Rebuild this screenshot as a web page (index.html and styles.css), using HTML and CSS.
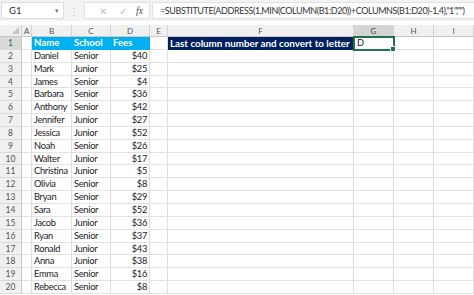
FILE: index.html
```html
<!DOCTYPE html>
<html>
<head>
    <title>Last column letter</title>
    <link rel="stylesheet" href="styles.css">
</head>
<body>
    <div class="toolbar">
        <div class="namebox">
            <span>G1</span>
            <span class="namebox-arrow">&#9662;</span>
        </div>
        <div class="grip">&#8942;</div>
        <div class="fxbox">
            <span class="fx-btn">&#10005;</span>
            <span class="fx-btn">&#10003;</span>
            <span class="fx-label">fx</span>
        </div>
        <div class="formula">=SUBSTITUTE(ADDRESS(1,MIN(COLUMN(B1:D20))+COLUMNS(B1:D20)-1,4),"1","")</div>
    </div>

    <div class="sheet">
        <div class="row colheads">
            <div class="corner"></div>
            <div>A</div><div>B</div><div>C</div><div>D</div><div>E</div><div>F</div>
            <div class="active-col">G</div><div>H</div><div>I</div>
        </div>
        <div class="row">
            <div class="rh active-row">1</div><div></div>
            <div class="blue">Name</div><div class="blue">School</div><div class="blue">Fees</div>
            <div></div><div class="navy">Last column number and convert to letter</div>
            <div class="selected">D</div><div></div><div></div>
        </div>
        <div class="row"><div class="rh">2</div><div></div><div>Daniel</div><div>Senior</div><div class="num">$40</div><div></div><div></div><div></div><div></div><div></div></div>
        <div class="row"><div class="rh">3</div><div></div><div>Mark</div><div>Junior</div><div class="num">$25</div><div></div><div></div><div></div><div></div><div></div></div>
        <div class="row"><div class="rh">4</div><div></div><div>James</div><div>Senior</div><div class="num">$4</div><div></div><div></div><div></div><div></div><div></div></div>
        <div class="row"><div class="rh">5</div><div></div><div>Barbara</div><div>Senior</div><div class="num">$36</div><div></div><div></div><div></div><div></div><div></div></div>
        <div class="row"><div class="rh">6</div><div></div><div>Anthony</div><div>Senior</div><div class="num">$42</div><div></div><div></div><div></div><div></div><div></div></div>
        <div class="row"><div class="rh">7</div><div></div><div>Jennifer</div><div>Junior</div><div class="num">$27</div><div></div><div></div><div></div><div></div><div></div></div>
        <div class="row"><div class="rh">8</div><div></div><div>Jessica</div><div>Junior</div><div class="num">$52</div><div></div><div></div><div></div><div></div><div></div></div>
        <div class="row"><div class="rh">9</div><div></div><div>Noah</div><div>Senior</div><div class="num">$26</div><div></div><div></div><div></div><div></div><div></div></div>
        <div class="row"><div class="rh">10</div><div></div><div>Walter</div><div>Junior</div><div class="num">$17</div><div></div><div></div><div></div><div></div><div></div></div>
        <div class="row"><div class="rh">11</div><div></div><div>Christina</div><div>Junior</div><div class="num">$5</div><div></div><div></div><div></div><div></div><div></div></div>
        <div class="row"><div class="rh">12</div><div></div><div>Olivia</div><div>Senior</div><div class="num">$8</div><div></div><div></div><div></div><div></div><div></div></div>
        <div class="row"><div class="rh">13</div><div></div><div>Bryan</div><div>Senior</div><div class="num">$29</div><div></div><div></div><div></div><div></div><div></div></div>
        <div class="row"><div class="rh">14</div><div></div><div>Sara</div><div>Senior</div><div class="num">$52</div><div></div><div></div><div></div><div></div><div></div></div>
        <div class="row"><div class="rh">15</div><div></div><div>Jacob</div><div>Junior</div><div class="num">$36</div><div></div><div></div><div></div><div></div><div></div></div>
        <div class="row"><div class="rh">16</div><div></div><div>Ryan</div><div>Senior</div><div class="num">$37</div><div></div><div></div><div></div><div></div><div></div></div>
        <div class="row"><div class="rh">17</div><div></div><div>Ronald</div><div>Junior</div><div class="num">$43</div><div></div><div></div><div></div><div></div><div></div></div>
        <div class="row"><div class="rh">18</div><div></div><div>Anna</div><div>Junior</div><div class="num">$38</div><div></div><div></div><div></div><div></div><div></div></div>
        <div class="row"><div class="rh">19</div><div></div><div>Emma</div><div>Senior</div><div class="num">$16</div><div></div><div></div><div></div><div></div><div></div></div>
        <div class="row"><div class="rh">20</div><div></div><div>Rebecca</div><div>Senior</div><div class="num">$8</div><div></div><div></div><div></div><div></div><div></div></div>
    </div>
</body>
</html>
```

FILE: styles.css
```css
body {
    margin: 0;
    width: 474px;
    height: 295px;
    overflow: hidden;
    background: #fff;
    font-family: Lato, "Noto Sans", sans-serif;
    color: #222;
}
.toolbar {
    display: flex;
    align-items: center;
    height: 21px;
    padding: 0 0 0 1px;
    background: #f3f3f3;
    box-sizing: border-box;
}
.namebox {
    display: flex;
    justify-content: space-between;
    align-items: center;
    width: 63px;
    height: 17px;
    padding: 0 4px 0 7px;
    box-sizing: border-box;
    background: #fff;
    border: 1px solid #dcdcdc;
    font-size: 9.5px;
    color: #333;
}
.namebox-arrow {
    font-size: 7px;
    color: #777;
}
.grip {
    width: 20px;
    text-align: center;
    color: #c4c4c4;
    font-size: 10px;
}
.fxbox {
    display: flex;
    align-items: center;
    width: 66px;
    height: 17px;
    box-sizing: border-box;
    padding-left: 8px;
    background: #fff;
    border: 1px solid #e0e0e0;
}
.fx-btn {
    width: 20px;
    text-align: center;
    color: #c0c0c0;
    font-size: 10px;
}
.fx-label {
    margin-left: 3px;
    font-family: "Liberation Serif", serif;
    font-style: italic;
    font-size: 10px;
    color: #555;
}
.formula {
    flex: 1;
    height: 17px;
    margin-left: 2px;
    padding-left: 7px;
    box-sizing: border-box;
    background: #fff;
    border: 1px solid #e0e0e0;
    border-right: none;
    font-size: 9px;
    letter-spacing: -0.4px;
    line-height: 15px;
    color: #333;
    white-space: nowrap;
    overflow: hidden;
}
.sheet {
    margin-top: 4px;
}
.row {
    display: grid;
    grid-template-columns: 22px 10px 40px 39px 39px 18px 186px 40px 40px 40px;
    height: 12.85px;
}
.row > div {
    border-right: 1px solid #dedede;
    border-bottom: 1px solid #e2e2e2;
    box-sizing: border-box;
    padding: 0 2px;
    font-size: 9.3px;
    letter-spacing: -0.3px;
    line-height: 12px;
    white-space: nowrap;
    overflow: hidden;
}
.colheads {
    height: 12px;
}
.colheads > div {
    background: #f0f0f0;
    border-right: 1px solid #d4d4d4;
    border-bottom: 1px solid #c8c8c8;
    text-align: center;
    font-size: 8px;
    letter-spacing: 0;
    line-height: 12px;
    color: #555;
}
.colheads .corner {
    position: relative;
}
.corner::after {
    content: "";
    position: absolute;
    right: 2px;
    bottom: 2px;
    border-left: 7px solid transparent;
    border-bottom: 7px solid #c4c4c4;
}
.colheads .active-col {
    background: #d4d4d4;
    border-bottom: 1px solid #217346;
    color: #444;
}
.row > .rh {
    background: #f0f0f0;
    border-right: 1px solid #c8c8c8;
    border-bottom: 1px solid #dadada;
    text-align: center;
    font-size: 8.5px;
    letter-spacing: 0;
    color: #555;
}
.row > .active-row {
    background: #d9d9d9;
    color: #217346;
}
.row > .num {
    text-align: right;
}
.row > .blue {
    background: #00b0f0;
    border-color: #00b0f0;
    color: #fff;
    font-weight: bold;
    font-size: 9.6px;
    letter-spacing: 0;
}
.row > .navy {
    background: #002060;
    border-color: #002060;
    color: #fff;
    font-weight: bold;
    font-size: 9.8px;
    letter-spacing: 0;
}
.row > .selected {
    position: relative;
    overflow: visible;
    outline: 2px solid #217346;
    outline-offset: -1px;
    padding-left: 3px;
}
.selected::after {
    content: "";
    position: absolute;
    right: -3px;
    bottom: -3px;
    width: 4px;
    height: 4px;
    background: #217346;
    border: 1px solid #fff;
}
```
